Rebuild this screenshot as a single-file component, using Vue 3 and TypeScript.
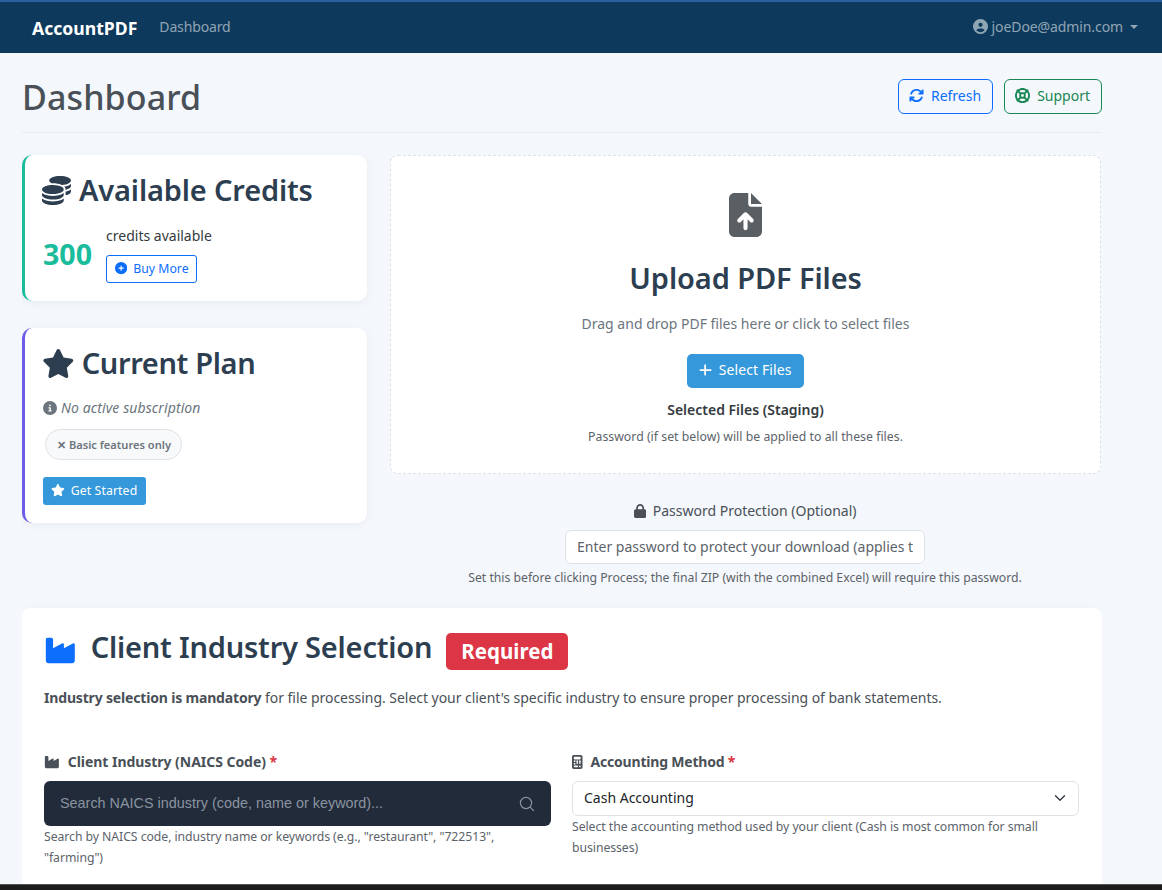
<script setup lang="ts">
// Dashboard AccountPDF : crédits, plan, zone d'upload et sélection d'industrie.
const icons = {
  coins: { box: '0 0 512 512', d: 'M512 80c0 18-14.3 34.6-38.4 48c-29.1 16.1-72.5 27.5-122.3 30.9c-3.7-1.8-7.4-3.5-11.3-5C300.6 137.4 248.2 128 192 128c-8.3 0-16.4 .2-24.5 .6l-1.1-.6C142.3 114.6 128 98 128 80c0-44.2 86-80 192-80S512 35.8 512 80zM160.7 161.1c10.2-.7 20.7-1.1 31.3-1.1c62.2 0 117.4 12.3 152.5 31.4C369.3 204.9 384 221.7 384 240c0 4-.7 7.9-2.1 11.7c-4.6 13.2-17 25.3-35 35.5c0 0 0 0 0 0c-.1 .1-.3 .1-.4 .2l0 0 0 0c-.3 .2-.6 .3-.9 .5c-35 19.4-90.8 32-153.6 32c-59.6 0-112.9-11.3-148.2-29.1c-1.9-.9-3.7-1.9-5.5-2.9C14.3 274.6 0 258 0 240c0-34.8 53.4-64.5 128-75.4c10.5-1.5 21.4-2.7 32.7-3.5zM416 240c0-21.9-10.6-39.9-24.1-53.4c28.3-4.4 54.2-11.4 76.2-20.5c16.3-6.8 31.5-15.2 43.9-25.5V176c0 19.3-16.5 37.1-43.8 50.9c-14.6 7.4-32.4 13.7-52.4 18.5c.1-1.8 .2-3.5 .2-5.3zm-32 96c0 18-14.3 34.6-38.4 48c-1.8 1-3.6 1.9-5.5 2.9C304.9 404.7 251.6 416 192 416c-62.8 0-118.6-12.6-153.6-32C14.3 370.6 0 354 0 336V300.6c12.5 10.3 27.6 18.7 43.9 25.5C83.4 342.6 135.8 352 192 352s108.6-9.4 148.1-25.9c7.8-3.2 15.3-6.9 22.4-10.9c6.1-3.4 11.8-7.2 17.2-11.2c1.5-1.1 2.9-2.3 4.3-3.4V304v5.7V336zm32 0V304 278.1c19-4.2 36.5-9.5 52.1-16c16.3-6.8 31.5-15.2 43.9-25.5V272c0 10.5-5 21-14.9 30.9c-16.3 16.3-45 29.7-81.3 38.4c.1-1.7 .2-3.5 .2-5.3zM192 448c56.2 0 108.6-9.4 148.1-25.9c16.3-6.8 31.5-15.2 43.9-25.5V432c0 44.2-86 80-192 80S0 476.2 0 432V396.6c12.5 10.3 27.6 18.7 43.9 25.5C83.4 438.6 135.8 448 192 448z' },
  star: { box: '0 0 576 512', d: 'M316.9 18C311.6 7 300.4 0 288.1 0s-23.4 7-28.8 18L195 150.3 51.4 171.5c-12 1.8-22 10.2-25.7 21.7s-.7 24.2 7.9 32.7L137.8 329 113.2 474.7c-2 12 3 24.2 12.9 31.3s23 8 33.8 2.3l128.3-68.5 128.3 68.5c10.8 5.7 23.9 4.9 33.8-2.3s14.9-19.3 12.9-31.3L438.5 329 542.7 225.9c8.6-8.5 11.7-21.2 7.9-32.7s-13.7-19.9-25.7-21.7L381.2 150.3 316.9 18z' },
  info: { box: '0 0 512 512', d: 'M256 512A256 256 0 1 0 256 0a256 256 0 1 0 0 512zM216 336h24V272H216c-13.3 0-24-10.7-24-24s10.7-24 24-24h48c13.3 0 24 10.7 24 24v88h8c13.3 0 24 10.7 24 24s-10.7 24-24 24H216c-13.3 0-24-10.7-24-24s10.7-24 24-24zm40-208a32 32 0 1 1 0 64 32 32 0 1 1 0-64z' },
  circlePlus: { box: '0 0 512 512', d: 'M256 512A256 256 0 1 0 256 0a256 256 0 1 0 0 512zM232 344V280H168c-13.3 0-24-10.7-24-24s10.7-24 24-24h64V168c0-13.3 10.7-24 24-24s24 10.7 24 24v64h64c13.3 0 24 10.7 24 24s-10.7 24-24 24H280v64c0 13.3-10.7 24-24 24s-24-10.7-24-24z' },
  user: { box: '0 0 512 512', d: 'M399 384.2C376.9 345.8 335.4 320 288 320H224c-47.4 0-88.9 25.8-111 64.2c35.2 39.2 86.2 63.8 143 63.8s107.8-24.7 143-63.8zM0 256a256 256 0 1 1 512 0A256 256 0 1 1 0 256zm256 16a72 72 0 1 0 0-144 72 72 0 1 0 0 144z' },
  sync: { box: '0 0 512 512', d: 'M105.1 202.6c7.7-21.8 20.2-42.3 37.8-59.8c62.5-62.5 163.8-62.5 226.3 0L386.3 160H352c-17.7 0-32 14.3-32 32s14.3 32 32 32H463.5c0 0 0 0 0 0h.4c17.7 0 32-14.3 32-32V80c0-17.7-14.3-32-32-32s-32 14.3-32 32v35.2L414.4 97.6c-87.5-87.5-229.3-87.5-316.8 0C73.2 122 55.6 150.7 44.8 181.4c-5.9 16.7 2.9 34.9 19.5 40.8s34.9-2.9 40.8-19.5zM39 289.3c-5 1.5-9.8 4.2-13.7 8.2c-4 4-6.7 8.8-8.1 14c-.3 1.2-.6 2.5-.8 3.8c-.3 1.7-.4 3.4-.4 5.1V432c0 17.7 14.3 32 32 32s32-14.3 32-32V396.9l17.6 17.5 0 0c87.5 87.4 229.3 87.4 316.7 0c24.4-24.4 42.1-53.1 52.9-83.7c5.9-16.7-2.9-34.9-19.5-40.8s-34.9 2.9-40.8 19.5c-7.7 21.8-20.2 42.3-37.8 59.8c-62.5 62.5-163.8 62.5-226.3 0l-.1-.1L125.6 352H160c17.7 0 32-14.3 32-32s-14.3-32-32-32H48.4c-1.6 0-3.2 .1-4.8 .3s-3.1 .5-4.6 1z' },
  lifeRing: { box: '0 0 512 512', d: 'M367.2 412.5C335.9 434.9 297.5 448 256 448s-79.9-13.1-111.2-35.5l58-58c15.8 8.6 34 13.5 53.3 13.5s37.4-4.9 53.3-13.5l58 58zm90.7 .8c33.8-43.4 54-98 54-157.3s-20.2-113.9-54-157.3c9-12.5 7.9-30.1-3.4-41.3S425.8 45 413.3 54C369.9 20.2 315.3 0 256 0S142.1 20.2 98.7 54c-12.5-9-30.1-7.9-41.3 3.4S45 86.2 54 98.7C20.2 142.1 0 196.7 0 256s20.2 113.9 54 157.3c-9 12.5-7.9 30.1 3.4 41.3S86.2 467 98.7 458c43.4 33.8 98 54 157.3 54s113.9-20.2 157.3-54c12.5 9 30.1 7.9 41.3-3.4s12.4-28.8 3.4-41.3zm-45.5-46.1l-58-58c8.6-15.8 13.5-34 13.5-53.3s-4.9-37.4-13.5-53.3l58-58C434.9 176.1 448 214.5 448 256s-13.1 79.9-35.5 111.2zM367.2 99.5l-58 58c-15.8-8.6-34-13.5-53.3-13.5s-37.4 4.9-53.3 13.5l-58-58C176.1 77.1 214.5 64 256 64s79.9 13.1 111.2 35.5zM157.5 309.3l-58 58C77.1 335.9 64 297.5 64 256s13.1-79.9 35.5-111.2l58 58c-8.6 15.8-13.5 34-13.5 53.3s4.9 37.4 13.5 53.3zM208 256a48 48 0 1 1 96 0 48 48 0 1 1 -96 0z' },
  fileUp: { box: '0 0 384 512', d: 'M64 0C28.7 0 0 28.7 0 64V448c0 35.3 28.7 64 64 64H320c35.3 0 64-28.7 64-64V160H256c-17.7 0-32-14.3-32-32V0H64zM256 0V128H384L256 0zM216 408c0 13.3-10.7 24-24 24s-24-10.7-24-24V305.9l-31 31c-9.4 9.4-24.6 9.4-33.9 0s-9.4-24.6 0-33.9l72-72c9.4-9.4 24.6-9.4 33.9 0l72 72c9.4 9.4 9.4 24.6 0 33.9s-24.6 9.4-33.9 0l-31-31V408z' },
  lock: { box: '0 0 448 512', d: 'M144 144v48H304V144c0-44.2-35.8-80-80-80s-80 35.8-80 80zM80 192V144C80 64.5 144.5 0 224 0s144 64.5 144 144v48h16c35.3 0 64 28.7 64 64V448c0 35.3-28.7 64-64 64H64c-35.3 0-64-28.7-64-64V256c0-35.3 28.7-64 64-64H80z' },
  industry: { box: '0 0 576 512', d: 'M64 32C46.3 32 32 46.3 32 64V304v48 80c0 26.5 21.5 48 48 48H496c26.5 0 48-21.5 48-48V304 152.2c0-18.2-19.4-29.7-35.4-21.1L352 215.4V152.2c0-18.2-19.4-29.7-35.4-21.1L160 215.4V64c0-17.7-14.3-32-32-32H64z' },
  calculator: { box: '0 0 384 512', d: 'M64 0C28.7 0 0 28.7 0 64V448c0 35.3 28.7 64 64 64H320c35.3 0 64-28.7 64-64V64c0-35.3-28.7-64-64-64H64zM96 64H288c17.7 0 32 14.3 32 32v32c0 17.7-14.3 32-32 32H96c-17.7 0-32-14.3-32-32V96c0-17.7 14.3-32 32-32zm32 160a32 32 0 1 1 -64 0 32 32 0 1 1 64 0zM96 352a32 32 0 1 1 0-64 32 32 0 1 1 0 64zM64 416c0-17.7 14.3-32 32-32h96c17.7 0 32 14.3 32 32s-14.3 32-32 32H96c-17.7 0-32-14.3-32-32zM192 256a32 32 0 1 1 0-64 32 32 0 1 1 0 64zm32 32a32 32 0 1 1 -64 0 32 32 0 1 1 64 0zm64-32a32 32 0 1 1 0-64 32 32 0 1 1 0 64zm32 32a32 32 0 1 1 -64 0 32 32 0 1 1 64 0zM288 448a32 32 0 1 1 0-64 32 32 0 1 1 0 64z' },
  plus: { box: '0 0 448 512', d: 'M256 80c0-17.7-14.3-32-32-32s-32 14.3-32 32V224H48c-17.7 0-32 14.3-32 32s14.3 32 32 32H192V432c0 17.7 14.3 32 32 32s32-14.3 32-32V288H432c17.7 0 32-14.3 32-32s-14.3-32-32-32H256V80z' },
};
</script>

<template>
  <div class="screen">
    <nav class="navbar">
      <span class="brand">AccountPDF</span>
      <span class="nav-link">Dashboard</span>
      <span class="nav-user">
        <svg class="ic" :viewBox="icons.user.box"><path :d="icons.user.d" /></svg>
        joeDoe@admin.com
        <span class="caret"></span>
      </span>
    </nav>

    <main class="page">
      <header class="page-head">
        <h1>Dashboard</h1>
        <div class="head-actions">
          <button class="btn btn-blue">
            <svg class="ic" :viewBox="icons.sync.box"><path :d="icons.sync.d" /></svg>
            Refresh
          </button>
          <button class="btn btn-green">
            <svg class="ic" :viewBox="icons.lifeRing.box"><path :d="icons.lifeRing.d" /></svg>
            Support
          </button>
        </div>
      </header>

      <div class="top-grid">
        <aside class="side">
          <section class="card credits">
            <h2>
              <svg class="ic coins" :viewBox="icons.coins.box"><path :d="icons.coins.d" /></svg>
              Available Credits
            </h2>
            <div class="credit-row">
              <span class="credit-num">300</span>
              <div class="credit-info">
                <p>credits available</p>
                <button class="btn-sm">
                  <svg class="ic" :viewBox="icons.circlePlus.box"><path :d="icons.circlePlus.d" /></svg>
                  Buy More
                </button>
              </div>
            </div>
          </section>

          <section class="card plan">
            <h2>
              <svg class="ic" :viewBox="icons.star.box"><path :d="icons.star.d" /></svg>
              Current Plan
            </h2>
            <p class="no-sub">
              <svg class="ic" :viewBox="icons.info.box"><path :d="icons.info.d" /></svg>
              <em>No active subscription</em>
            </p>
            <span class="pill">✕ Basic features only</span>
            <button class="btn-start">
              <svg class="ic" :viewBox="icons.star.box"><path :d="icons.star.d" /></svg>
              Get Started
            </button>
          </section>
        </aside>

        <div class="upload-col">
          <section class="dropzone">
            <svg class="file-ic" :viewBox="icons.fileUp.box"><path :d="icons.fileUp.d" /></svg>
            <h2>Upload PDF Files</h2>
            <p class="drop-hint">Drag and drop PDF files here or click to select files</p>
            <button class="btn-select">
              <svg class="ic" :viewBox="icons.plus.box"><path :d="icons.plus.d" /></svg>
              Select Files
            </button>
            <h3>Selected Files (Staging)</h3>
            <p class="drop-note">Password (if set below) will be applied to all these files.</p>
          </section>

          <div class="password">
            <label>
              <svg class="ic" :viewBox="icons.lock.box"><path :d="icons.lock.d" /></svg>
              Password Protection (Optional)
            </label>
            <input type="password" placeholder="Enter password to protect your download (applies to all files)" />
            <small>Set this before clicking Process; the final ZIP (with the combined Excel) will require this password.</small>
          </div>
        </div>
      </div>

      <section class="card industry">
        <div class="industry-title">
          <svg class="ic" :viewBox="icons.industry.box"><path :d="icons.industry.d" /></svg>
          <h2>Client Industry Selection</h2>
          <span class="badge">Required</span>
        </div>
        <p class="industry-lead">
          <strong>Industry selection is mandatory</strong> for file processing. Select your client's specific industry to ensure proper processing of bank statements.
        </p>
        <div class="fields">
          <div class="field">
            <label>
              <svg class="ic" :viewBox="icons.industry.box"><path :d="icons.industry.d" /></svg>
              <span>Client Industry (NAICS Code) <span class="req">*</span></span>
            </label>
            <div class="search-box">
              <input type="text" placeholder="Search NAICS industry (code, name or keyword)..." />
              <svg class="search-ic" viewBox="0 0 16 16" fill="none" stroke="currentColor" stroke-width="1.2">
                <circle cx="7" cy="7" r="5.6" />
                <path d="M11.2 11.2 14.6 14.6" stroke-linecap="round" />
              </svg>
            </div>
            <small class="hint-left">Search by NAICS code, industry name or keywords (e.g., "restaurant", "722513", "farming")</small>
          </div>
          <div class="field field-method">
            <label>
              <svg class="ic" :viewBox="icons.calculator.box"><path :d="icons.calculator.d" /></svg>
              <span>Accounting Method <span class="req">*</span></span>
            </label>
            <div class="select-box">
              <span>Cash Accounting</span>
              <svg viewBox="0 0 16 16" fill="none" stroke="#343a40" stroke-width="1.8" stroke-linecap="round" stroke-linejoin="round">
                <path d="m2 5 6 6 6-6" />
              </svg>
            </div>
            <small>Select the accounting method used by your client (Cash is most common for small businesses)</small>
          </div>
        </div>
      </section>
    </main>

    <div class="os-bar"></div>
  </div>
</template>

<style>
html,
body {
  margin: 0;
  background: #f4f7fb;
}
</style>

<style scoped>
.screen {
  display: flex;
  flex-direction: column;
  width: 1162px;
  height: 890px;
  overflow: hidden;
  background: #f4f7fb;
  font-family: "Noto Sans", sans-serif;
  font-size: 14px;
  color: #343a40;
}
.ic {
  display: inline-block;
  height: 1em;
  fill: currentColor;
  flex: none;
}
h1,
h2,
h3,
p {
  margin: 0;
}
button {
  font: inherit;
  cursor: pointer;
}

.navbar {
  flex: none;
  display: flex;
  align-items: center;
  height: 51px;
  border-top: 2px solid #2a5f9e;
  padding: 0 24px 0 32px;
  background: #0d3a5c;
  color: rgba(255, 255, 255, 0.55);
}
.brand {
  font-size: 17.6px;
  font-weight: 700;
  color: #fff;
  margin-right: 22px;
}
.nav-link {
  margin-top: -3px;
  letter-spacing: -0.14px;
}
.nav-user {
  margin-left: auto;
  margin-top: -2px;
  display: flex;
  align-items: center;
  gap: 4px;
  letter-spacing: -0.1px;
}
.nav-user .ic {
  height: 15px;
}
.caret {
  width: 0;
  height: 0;
  margin-left: 3px;
  border-top: 4px solid currentColor;
  border-left: 4px solid transparent;
  border-right: 4px solid transparent;
}

.page {
  flex: 1;
  min-height: 0;
  overflow: hidden;
  width: 1080px;
  margin-left: 22px;
}
.page-head {
  display: flex;
  align-items: center;
  justify-content: space-between;
  box-sizing: border-box;
  height: 80px;
  padding-top: 7px;
  border-bottom: 1px solid #e9ecef;
  margin-bottom: 22px;
}
h1 {
  margin-top: 2px;
  font-size: 34px;
  font-weight: 500;
  color: #495057;
  letter-spacing: 0.12px;
}
.head-actions {
  display: flex;
  gap: 11px;
}
.btn {
  display: flex;
  align-items: center;
  gap: 7px;
  height: 35px;
  padding: 0 11px 2px 10px;
  border-radius: 6px;
  background: transparent;
  border: 1px solid;
}
.btn .ic {
  height: 15px;
}
.btn-blue {
  color: #0d6efd;
  border-color: #0d6efd;
}
.btn-green {
  color: #198754;
  border-color: #198754;
}

.top-grid {
  display: grid;
  grid-template-columns: 345px 711px;
  gap: 23px;
  margin-bottom: 22px;
}
.side {
  display: flex;
  flex-direction: column;
  gap: 27px;
}
.card {
  background: #fff;
  border-radius: 10px;
  box-shadow: 0 2px 10px rgba(0, 0, 0, 0.05);
}
.side .card {
  border-left: 3px solid;
  padding: 17px 18px;
}
.side h2 {
  display: flex;
  align-items: center;
  gap: 7px;
  font-size: 29px;
  font-weight: 600;
  line-height: 36px;
  color: #2c3e50;
  letter-spacing: -0.16px;
}
.side h2 .coins {
  margin-left: -1px;
  margin-right: 1px;
}
.credits {
  border-left-color: #1abc9c !important;
  height: 146px;
  box-sizing: border-box;
}
.credit-row {
  display: flex;
  align-items: center;
  gap: 14px;
  margin-top: 18px;
}
.credit-num {
  margin-top: -2px;
  font-size: 28.6px;
  font-weight: 700;
  color: #1abc9c;
}
.credit-info p {
  margin-bottom: 10px;
}
.btn-sm {
  display: flex;
  align-items: center;
  gap: 6px;
  height: 28px;
  padding: 0 7px 1px 8px;
  font-size: 12.25px;
  color: #0d6efd;
  background: transparent;
  border: 1px solid #0d6efd;
  border-radius: 3px;
}
.plan {
  border-left-color: #6c5ce7 !important;
  height: 195px;
  box-sizing: border-box;
}
.plan h2 {
  letter-spacing: -0.35px;
}
.plan h2 .ic {
  margin-left: -1px;
}
.no-sub {
  display: flex;
  align-items: center;
  gap: 4px;
  margin-top: 17px;
  color: #6c757d;
  letter-spacing: 0.1px;
}
.pill {
  display: inline-block;
  margin: 12px 0 0 2px;
  padding: 7px 10px 7px 11px;
  font-size: 11.1px;
  font-weight: 600;
  color: #6c757d;
  background: #f8f9fa;
  border: 1px solid #dee2e6;
  border-radius: 16px;
}
.btn-start {
  display: flex;
  align-items: center;
  gap: 6px;
  height: 28px;
  margin-top: 17px;
  padding: 0 9px 1px 8px;
  font-size: 12.25px;
  letter-spacing: 0.1px;
  color: #fff;
  background: #3498db;
  border: 0;
  border-radius: 3px;
}

.dropzone {
  display: flex;
  flex-direction: column;
  align-items: center;
  height: 319px;
  box-sizing: border-box;
  padding-top: 37px;
  background: #fff;
  border: 1px dashed #dee2e6;
  border-radius: 8px;
}
.file-ic {
  height: 44px;
  fill: #5a5f64;
}
.dropzone h2 {
  margin-top: 23px;
  font-size: 29px;
  font-weight: 600;
  line-height: 36px;
  color: #2c3e50;
  letter-spacing: -0.1px;
}
.drop-hint {
  margin-top: 18px;
  color: #6c757d;
}
.btn-select {
  display: flex;
  align-items: center;
  gap: 7px;
  height: 34px;
  margin-top: 21px;
  padding: 0 12px 3px;
  color: #fff;
  background: #3498db;
  border: 0;
  border-radius: 5px;
  letter-spacing: 0.1px;
}
.dropzone h3 {
  margin-top: 12px;
  font-size: 14px;
  font-weight: 600;
  color: #343a40;
}
.drop-note {
  margin-top: 9px;
  font-size: 12.25px;
  letter-spacing: 0.03px;
  color: #5c636a;
}

.password {
  display: flex;
  flex-direction: column;
  align-items: center;
  margin-top: 27px;
  padding-right: 1px;
}
.password label {
  display: flex;
  align-items: center;
  gap: 7px;
  color: #495057;
}
.password input {
  box-sizing: border-box;
  width: 360px;
  height: 34px;
  margin-top: 10px;
  padding: 0 11px 2px;
  font: inherit;
  background: #fff;
  border: 1px solid #dee2e6;
  border-radius: 6px;
}
.password input::placeholder {
  color: #5c636a;
  opacity: 1;
}
.password small {
  margin-top: 5px;
  font-size: 12.25px;
  letter-spacing: -0.02px;
  color: #5c636a;
}

.industry {
  padding: 21px 22px 0;
  height: 300px;
  box-sizing: border-box;
  border-radius: 8px;
}
.industry-title {
  display: flex;
  align-items: flex-start;
}
.industry-title .ic {
  height: 29px;
  margin-top: 7px;
  color: #0d6efd;
  margin-right: 14px;
}
.industry-title h2 {
  font-size: 29px;
  font-weight: 600;
  line-height: 36px;
  color: #2c3e50;
  letter-spacing: -0.2px;
}
.badge {
  margin: 4px 0 0 14px;
  padding: 5px 15px;
  font-size: 20.5px;
  font-weight: 700;
  line-height: 27px;
  color: #fff;
  background: #dc3545;
  border-radius: 5px;
}
.industry-lead {
  margin-top: 18px;
  color: #495057;
  letter-spacing: -0.04px;
}
.industry-lead strong {
  font-weight: 700;
  letter-spacing: -0.17px;
}
.fields {
  display: grid;
  grid-template-columns: 507px 507px;
  gap: 21px;
  margin-top: 45px;
}
.field label {
  display: flex;
  align-items: center;
  gap: 8px;
  font-weight: 700;
  color: #495057;
  letter-spacing: -0.04px;
}
.field-method label {
  letter-spacing: -0.2px;
}
.req {
  color: #dc3545;
}
.field small {
  display: block;
  font-size: 12.25px;
  line-height: 21px;
  letter-spacing: -0.06px;
  color: #5c636a;
}
.hint-left {
  max-width: 490px;
}
.search-box {
  display: flex;
  align-items: center;
  height: 45px;
  margin-top: 10px;
  padding: 0 16px;
  background: #212b3a;
  border-radius: 6px;
}
.search-box input {
  flex: 1;
  margin-bottom: 2px;
  font-family: "Liberation Sans", Arial, sans-serif;
  font-size: 14.4px;
  background: transparent;
  border: 0;
  padding: 0;
}
.search-box input::placeholder {
  color: #8b93a0;
  opacity: 1;
}
.search-ic {
  width: 16px;
  height: 16px;
  color: #8b93a0;
}
.select-box {
  display: flex;
  align-items: center;
  justify-content: space-between;
  box-sizing: border-box;
  height: 35px;
  margin-top: 10px;
  padding: 0 12px 2px 11px;
  color: #212529;
  border: 1px solid #dee2e6;
  border-radius: 6px;
}
.select-box svg {
  width: 12px;
  height: 12px;
}

.os-bar {
  flex: none;
  height: 5px;
  border-top: 1px solid #555;
  background: #1c1c1c;
}
</style>
